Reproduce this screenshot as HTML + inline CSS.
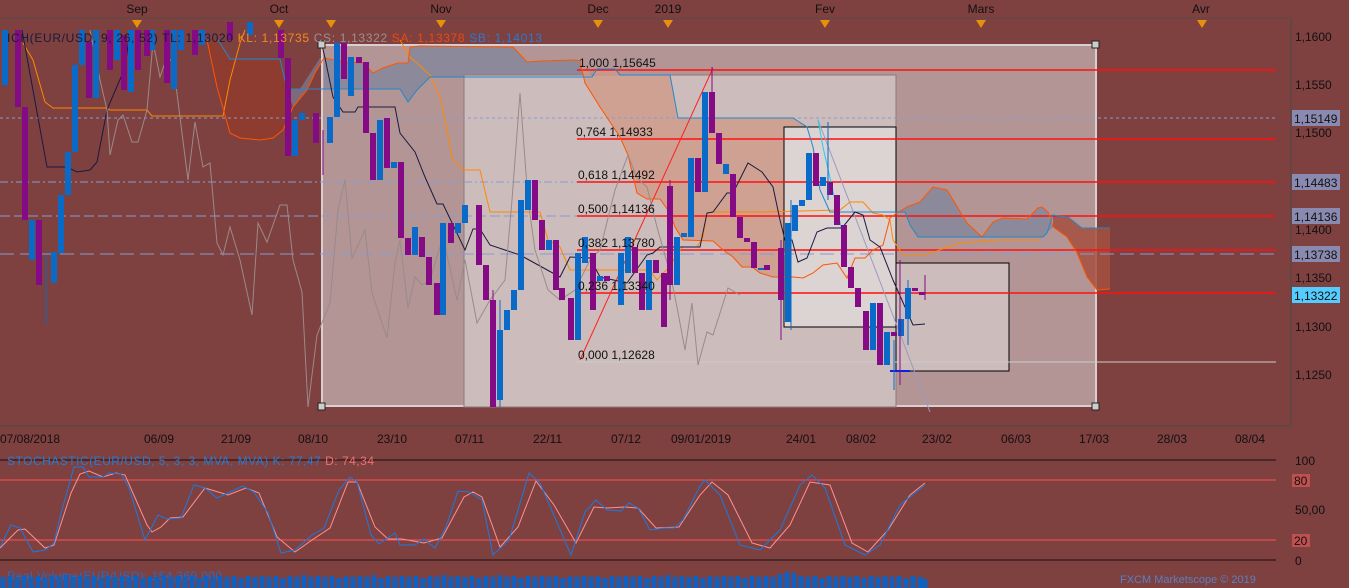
<!DOCTYPE html>
<html><head><meta charset="utf-8"><style>
html,body{margin:0;padding:0;background:#7f4040;width:1349px;height:588px;overflow:hidden}
svg{display:block;font-family:"Liberation Sans",sans-serif;font-size:12px}
</style></head><body>
<svg width="1349" height="588" viewBox="0 0 1349 588">
<rect width="1349" height="588" fill="#7f4040"/>
<line x1="0" y1="18" x2="1291" y2="18" stroke="#5a4a4a"/>
<g fill="#111" text-anchor="middle">
<text x="137" y="13">Sep</text><text x="279" y="13">Oct</text><text x="441" y="13">Nov</text><text x="598" y="13">Dec</text><text x="668" y="13">2019</text><text x="825" y="13">Fev</text><text x="981" y="13">Mars</text><text x="1201" y="13">Avr</text>
</g>
<g fill="#e8900a">
<polygon points="132,20 142,20 137,28"/><polygon points="274,20 284,20 279,28"/><polygon points="326,20 336,20 331,28"/><polygon points="436,20 446,20 441,28"/><polygon points="593,20 603,20 598,28"/><polygon points="663,20 673,20 668,28"/><polygon points="820,20 830,20 825,28"/><polygon points="976,20 986,20 981,28"/><polygon points="1197,20 1207,20 1202,28"/>
</g>
<polygon points="207,40 218,40 230,59 280,59 287,89 293,107 283,130 273,138 260,140 240,138 230,133 217,87" fill="#8e3c30"/>
<polygon points="287,89 293,107 307,90 315,73 324,58 320,58 300,89" fill="#7e6a78"/>
<rect x="322" y="45" width="774" height="361" fill="#b49595" stroke="#d8d0d0" stroke-width="2"/>
<polygon points="324,58 347,62 363,63 373,73 383,68 398,63 408,63 410,47 420,46 513,47 527,62 540,61 576,60 580,61 592,77 560,77 480,77 430,77 417,90 408,102 400,89 324,89" fill="#8c8a9a"/>
<rect x="464" y="75" width="432" height="332" fill="#cdbcbc" stroke="#8a7a7a"/>
<polygon points="580,61 592,77 597,69 615,69 620,75 670,75 678,118 793,118 807,127 813,147 820,190 830,212 890,212 890,218 883,245 873,250 865,258 855,258 847,278 837,263 823,265 813,273 803,278 793,277 773,277 760,273 752,267 742,267 733,257 723,250 713,241 683,240 675,227 670,213 660,199 647,199 637,193 628,155 620,137 600,107 585,83" fill="#d09a88" opacity="0.8"/>
<polygon points="890,218 897,213 907,207 920,202 933,187 947,190 967,223 982,237 993,222 1003,218 1027,219 1038,208 1042,207 1048,212 1053,227 1043,237 918,237 910,225 905,212 897,212" fill="#8c8a9a"/>
<polygon points="1053,227 1067,237 1077,253 1087,277 1097,290 1110,289 1110,228 1082,228 1068,217 1058,216 1053,215" fill="#a55040" opacity="0.85"/>
<rect x="784" y="127" width="112" height="200" fill="#dcd3d3" stroke="#000"/>
<rect x="896" y="263" width="113" height="108" fill="#cdbcbc" stroke="#000"/>
<line x1="0" y1="118" x2="1276" y2="118" stroke="#8a9ad0" stroke-dasharray="3,3"/>
<line x1="0" y1="182" x2="1276" y2="182" stroke="#8a9ad0" stroke-dasharray="8,3,2,3"/>
<line x1="0" y1="216" x2="1276" y2="216" stroke="#8a9ad0" stroke-dasharray="10,4"/>
<line x1="0" y1="254" x2="1276" y2="254" stroke="#8a9ad0" stroke-dasharray="14,6"/>
<g stroke="#ff1010" stroke-width="1.5">
<line x1="577" y1="70" x2="1276" y2="70"/><line x1="577" y1="139" x2="1276" y2="139"/><line x1="577" y1="182" x2="1276" y2="182"/><line x1="577" y1="216" x2="1276" y2="216"/><line x1="577" y1="250" x2="1276" y2="250"/><line x1="577" y1="293" x2="1276" y2="293"/>
</g>
<line x1="577" y1="362" x2="1276" y2="362" stroke="#ccc"/>
<line x1="580" y1="360" x2="713" y2="68" stroke="#ff2020"/>
<line x1="818" y1="120" x2="930" y2="412" stroke="#9a9ac0"/>
<polyline fill="none" stroke="#22ccee" points="818,120 823,147 847,253"/>
<line x1="890" y1="371" x2="910" y2="371" stroke="#1020e0" stroke-width="2"/>
<polyline fill="none" stroke="#ff8800" points="23,43 33,60 45,102 53,108 107,108 110,110 147,110 152,116 223,116 230,80 240,43 245,30"/>
<polyline fill="none" stroke="#ff8800" points="400,40 410,57 430,75 440,97 447,130 452,158 463,170 480,170 490,212 540,212 548,240 560,247 570,270 593,270 650,270 657,280 663,273 670,267 677,253 683,247 697,247 703,237 707,213 713,212 760,212 840,210 850,202 863,202 873,213 883,215 890,220 893,240 903,255 925,255 960,243 1000,240 1040,240"/>
<polyline fill="none" stroke="#ff5500" points="207,40 217,87 230,133 240,138 260,140 273,138 283,130 293,107 307,90 315,73 324,58 347,62 363,63 373,73 383,68 398,63 408,63 410,47 420,46 513,47 527,62 540,61 576,60 580,61 585,83 600,107 620,137 628,155 637,193 647,199 660,199 670,213 675,227 683,240 713,241 723,250 733,257 742,267 752,267 760,273 773,277 793,277 803,278 813,273 823,265 837,263 847,278 855,258 865,258 873,250 883,245 890,218 897,213 907,207 920,202 933,187 947,190 967,223 982,237 993,222 1003,218 1027,219 1038,208 1042,207 1048,212 1053,227 1067,237 1077,253 1087,277 1097,290 1110,289"/>
<polyline fill="none" stroke="#2288cc" points="218,40 230,59 280,59 287,89 400,89 408,102 417,90 430,77 560,77 592,77 597,69 615,69 620,75 670,75 678,118 793,118 807,127 813,147 820,190 830,212 905,212 910,225 918,237 1043,237 1047,233 1053,215 1058,216 1068,217 1082,228 1110,228"/>
<polyline fill="none" stroke="#1a1a40" points="22,30 47,167 67,167 77,172 90,170 97,162 107,110 112,98 125,68 130,30"/>
<polyline fill="none" stroke="#1a1a40" points="322,45 325,58 333,97 343,112 355,112 358,107 395,107 400,133 415,152 425,177 437,204 443,204 465,250 473,229 480,229 490,245 520,255 560,277 570,257 590,258 600,277 627,283 647,255 653,253 660,247 700,247 707,213 713,212 727,193 733,193 748,163 762,172 773,187 780,220 785,240 792,240 798,262 807,258 817,232 827,228 842,228 855,212 863,215 870,240 880,247 893,280 913,325 925,324"/>
<polyline fill="none" stroke="#9a8a8a" points="90,30 100,80 107,110 110,155 118,120 123,115 132,142 138,142 147,110 153,42 160,77 167,57 173,62 182,133 188,180 195,122 203,167 210,163 217,243 223,255 230,227 240,260 252,315 258,223 267,242 280,205 287,205 293,260 302,292 308,407 317,335 330,303 338,210 345,180 352,258 365,230 372,293 387,338 395,263 400,240 408,308 415,277 422,285 430,280 443,237 457,300 465,260 477,323 490,300 505,280 512,200 520,93 528,200 535,250 548,290 560,300 575,290 590,260 600,250 615,190 628,155 637,178 647,187 657,227 670,273 677,307 685,350 692,303 698,365 707,332 713,335 728,288 740,295"/>
<g stroke-width="6" fill="none">
<path stroke="#0a6ac8" d="M5 30V85M32 220V260M54 252V283M61 195V253M68 152V195M75 65V152M82 30V65M96 30V98M117 30V60M131 30V92M152 30V50M174 30V89M181 30V50M202 30V45M250 22V35M295 120V156M302 113V120M330 117V143M337 43V117M351 57V96M380 120V180M394 162V168M415 227V255M443 223V315M458 223V233M465 205V223M500 330V400M507 310V330M514 290V310M521 200V290M528 180V210M549 240V250M578 253V340M585 237V263M600 276V281M621 253V305M628 237V273M649 260V310M677 237V285M684 233V237M691 158V237M705 92V192M726 164V174M761 268V270M788 223V322M795 205V231M802 200V206M809 153V200M823 177V186M873 303V350M887 332V365M901 319V336M908 288V319"/>
<path stroke="#850a85" d="M18 30V107M25 107V220M39 220V285M89 42V98M110 30V70M124 35V90M138 30V70M147 30V56M167 30V83M195 30V55M230 22V40M281 30V58M288 58V156M316 113V143M344 43V79M359 57V63M366 62V133M373 133V180M387 118V168M401 162V238M408 238V255M422 237V257M429 257V285M437 283V315M451 223V243M479 205V265M486 265V300M493 300V407M535 180V220M542 220V250M556 240V290M562 288V300M571 298V340M593 253V310M607 276V281M635 247V273M642 273V310M656 260V273M664 273V327M670 186V285M698 158V192M712 92V133M719 133V164M733 174V217M740 217V238M747 238V242M754 242V268M767 265V270M781 248V300M816 153V186M830 182V195M837 195V225M844 225V267M851 267V288M858 288V307M866 311V350M880 303V365M894 332V336M915 288V291M922 292V295"/>
</g>
<g stroke-width="1"><path stroke="#0a6ac8" d="M46 255V325M500 300V407M791 200V330M894 340V390M908 280V345M828 122V200"/><path stroke="#850a85" d="M323 130V175M493 290V407M670 180V300M712 67V110M781 240V340M900 260V385M925 275V300"/></g>
<g fill="#ccc" stroke="#222"><rect x="318" y="41" width="7" height="7"/><rect x="1092" y="41" width="7" height="7"/><rect x="318" y="403" width="7" height="7"/><rect x="1092" y="403" width="7" height="7"/></g>
<g fill="#111">
<text x="579" y="67">1,000 1,15645</text><text x="576" y="136">0,764 1,14933</text><text x="578" y="179">0,618 1,14492</text><text x="578" y="213">0,500 1,14136</text><text x="578" y="247">0,382 1,13780</text><text x="578" y="290">0,236 1,13340</text><text x="578" y="359">0,000 1,12628</text>
</g>
<text x="7" y="42" textLength="535" lengthAdjust="spacing"><tspan fill="#1a1a3a">ICH(EUR/USD, 9, 26, 52)  TL: 1,13020 </tspan><tspan fill="#f08a20"> KL: 1,13735 </tspan><tspan fill="#9a9090"> CS: 1,13322 </tspan><tspan fill="#e84a10"> SA: 1,13378 </tspan><tspan fill="#2a7ad0"> SB: 1,14013</tspan></text>
<line x1="1291" y1="18" x2="1291" y2="426" stroke="#4a4a4a"/>
<line x1="0" y1="426" x2="1291" y2="426" stroke="#4a4a4a"/>
<g fill="#111">
<text x="1295" y="41">1,1600</text><text x="1295" y="89">1,1550</text><text x="1295" y="137">1,1500</text><text x="1295" y="234">1,1400</text><text x="1295" y="282">1,1350</text><text x="1295" y="331">1,1300</text><text x="1295" y="379">1,1250</text>
</g>
<rect x="1292" y="110" width="48" height="16" fill="#8a8ab0"/><text x="1294" y="123" fill="#111">1,15149</text>
<rect x="1292" y="174" width="48" height="16" fill="#8a8ab0"/><text x="1294" y="187" fill="#111">1,14483</text>
<rect x="1292" y="208" width="48" height="16" fill="#8a8ab0"/><text x="1294" y="221" fill="#111">1,14136</text>
<rect x="1292" y="246" width="48" height="16" fill="#8a8ab0"/><text x="1294" y="259" fill="#111">1,13738</text>
<rect x="1292" y="287" width="48" height="16" fill="#55ccff"/><text x="1294" y="300" fill="#111">1,13322</text>
<g fill="#111">
<text x="0" y="443">07/08/2018</text><text x="144" y="443">06/09</text><text x="221" y="443">21/09</text><text x="298" y="443">08/10</text><text x="377" y="443">23/10</text><text x="455" y="443">07/11</text><text x="533" y="443">22/11</text><text x="611" y="443">07/12</text><text x="671" y="443">09/01/2019</text><text x="786" y="443">24/01</text><text x="846" y="443">08/02</text><text x="922" y="443">23/02</text><text x="1001" y="443">06/03</text><text x="1079" y="443">17/03</text><text x="1157" y="443">28/03</text><text x="1235" y="443">08/04</text>
</g>
<line x1="0" y1="460" x2="1276" y2="460" stroke="#111"/>
<line x1="0" y1="560" x2="1276" y2="560" stroke="#111"/>
<line x1="0" y1="480" x2="1276" y2="480" stroke="#ff5050"/>
<line x1="0" y1="540" x2="1276" y2="540" stroke="#ff5050"/>
<text x="7" y="465" fill="#2a7ad0" textLength="367" lengthAdjust="spacing">STOCHASTIC(EUR/USD, 5, 3, 3, MVA, MVA)  K: 77,47  <tspan fill="#f07070">D: 74,34</tspan></text>
<polyline fill="none" stroke="#ff9090" points="0,548 18,530 25,529 45,548 54,545 71,493 80,474 89,471 103,477 116,473 125,475 136,500 147,525 152,532 161,527 170,518 183,517 205,488 228,495 246,488 259,493 277,537 295,552 312,540 330,528 348,482 357,482 375,527 388,539 402,539 424,543 442,538 464,497 473,492 482,497 500,547 518,527 536,481 554,505 576,543 594,507 607,508 625,507 638,508 656,528 679,527 700,495 712,482 728,495 752,543 770,548 790,525 810,482 830,485 852,543 868,552 888,530 910,495 925,483"/>
<polyline fill="none" stroke="#1a7ae0" points="0,547 11,525 20,528 33,552 45,550 54,543 60,517 74,467 83,467 89,477 103,477 109,473 121,474 129,488 145,540 158,515 167,519 181,518 194,485 205,488 217,498 228,493 243,486 254,492 268,513 281,553 295,550 312,535 324,528 339,490 350,477 357,482 371,535 379,544 395,533 400,545 415,545 424,539 435,548 446,527 458,491 469,492 482,500 493,555 509,540 529,473 540,483 571,555 585,512 596,500 607,510 621,511 629,503 638,508 650,530 665,528 674,528 683,520 700,486 705,480 720,495 740,545 760,550 780,530 800,485 812,475 825,488 845,545 865,555 880,545 900,505 925,485"/>
<g fill="#111"><text x="1295" y="465">100</text><text x="1295" y="514">50,00</text><text x="1295" y="565">0</text></g>
<rect x="1292" y="474" width="18" height="13" fill="#c05050"/><text x="1294" y="485" fill="#111">80</text>
<rect x="1292" y="534" width="18" height="13" fill="#c05050"/><text x="1294" y="545" fill="#111">20</text>
<text x="7" y="580" fill="#2a6ac0" textLength="215" lengthAdjust="spacing">Real Volume(EUR/USD): 154,369,000</text>
<path stroke="#1060c0" stroke-width="5" d="M3 588V577M10 588V576M17 588V578M24 588V576M31 588V577M38 588V576M45 588V578M52 588V576M59 588V577M66 588V575M73 588V577M80 588V576M87 588V577M94 588V576M101 588V578M108 588V576M115 588V577M122 588V576M129 588V577M136 588V576M143 588V578M150 588V576M157 588V577M164 588V575M171 588V577M178 588V576M185 588V577M192 588V576M199 588V578M206 588V576M213 588V577M220 588V576M227 588V577M234 588V576M241 588V578M248 588V576M255 588V577M262 588V576M269 588V577M276 588V576M283 588V578M290 588V576M297 588V577M304 588V575M311 588V577M318 588V576M325 588V577M332 588V576M339 588V578M346 588V576M353 588V577M360 588V576M367 588V577M374 588V575M381 588V578M388 588V576M395 588V577M402 588V576M409 588V577M416 588V576M423 588V578M430 588V576M437 588V577M444 588V575M451 588V577M458 588V576M465 588V577M472 588V576M479 588V578M486 588V576M493 588V577M500 588V575M507 588V577M514 588V576M521 588V578M528 588V576M535 588V577M542 588V576M549 588V577M556 588V576M563 588V578M570 588V576M577 588V577M584 588V576M591 588V577M598 588V576M605 588V578M612 588V576M619 588V577M626 588V576M633 588V577M640 588V576M647 588V578M654 588V576M661 588V577M668 588V575M675 588V577M682 588V576M689 588V577M696 588V576M703 588V578M710 588V576M717 588V577M724 588V576M731 588V577M738 588V576M745 588V578M752 588V576M759 588V577M766 588V576M773 588V577M780 588V574M787 588V572M794 588V573M801 588V576M808 588V577M815 588V576M822 588V578M829 588V576M836 588V577M843 588V576M850 588V577M857 588V576M864 588V578M871 588V576M878 588V577M885 588V576M892 588V577M899 588V576M906 588V578M913 588V576M920 588V577M925 588V579"/>
<text x="1120" y="583" fill="#5a80c0" font-size="11">FXCM Marketscope © 2019</text>
</svg>
</body></html>
